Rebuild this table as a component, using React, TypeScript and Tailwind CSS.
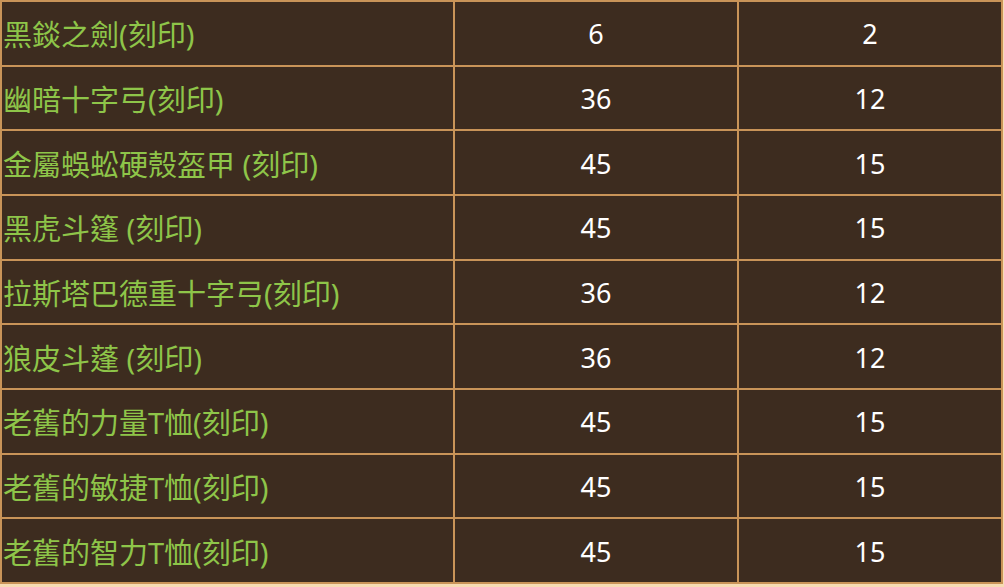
import React from "react";

const rows: [string, string, string][] = [
  ["黑錟之劍(刻印)", "6", "2"],
  ["幽暗十字弓(刻印)", "36", "12"],
  ["金屬蜈蚣硬殼盔甲 (刻印)", "45", "15"],
  ["黑虎斗篷 (刻印)", "45", "15"],
  ["拉斯塔巴德重十字弓(刻印)", "36", "12"],
  ["狼皮斗蓬 (刻印)", "36", "12"],
  ["老舊的力量T恤(刻印)", "45", "15"],
  ["老舊的敏捷T恤(刻印)", "45", "15"],
  ["老舊的智力T恤(刻印)", "45", "15"],
];

export default function App() {
  return (
    <div className="w-[1004px] h-[587px] bg-[#f7dcb4] overflow-hidden">
      <table
        className="w-[1003px] h-[584px] border-collapse bg-[#3d2c1f] text-[27px] leading-none"
        style={{ fontFamily: '"Noto Sans", "Noto Sans CJK TC", sans-serif' }}
      >
        <colgroup>
          <col className="w-[453px]" />
          <col className="w-[284px]" />
          <col />
        </colgroup>
        <tbody>
          {rows.map((r, i) => (
            <tr key={i}>
              <td className="border-2 border-[#c99458] pl-[1px] pt-[3px] text-[29px] text-[#8ec549] whitespace-nowrap">
                {r[0]}
              </td>
              <td className="border-2 border-[#c99458] pt-[1px] text-center text-white">
                {r[1]}
              </td>
              <td className="border-2 border-[#c99458] pt-[1px] text-center text-white">
                {r[2]}
              </td>
            </tr>
          ))}
        </tbody>
      </table>
    </div>
  );
}
